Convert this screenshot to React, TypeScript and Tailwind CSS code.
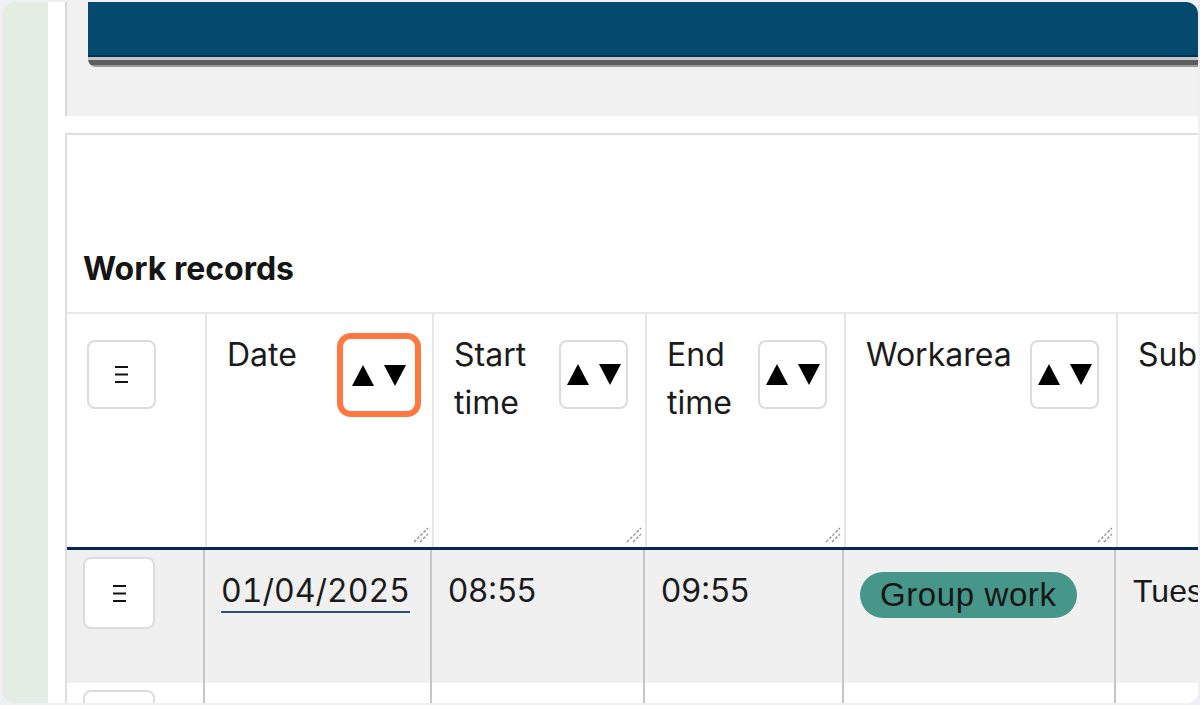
import React from 'react';

const columns = [
  { key: 'date', label: 'Date', width: 'w-[227px]', focused: true },
  { key: 'start', label: 'Start time', width: 'w-[213px]' },
  { key: 'end', label: 'End time', width: 'w-[199px]' },
  { key: 'area', label: 'Workarea', width: 'w-[272px]' },
  { key: 'sub', label: 'Sub-workarea', width: 'w-[272px]', noSort: true },
];

const records = [
  { date: '01/04/2025', start: '08:55', end: '09:55', area: 'Group work', sub: 'Tuesday group', bg: 'bg-[#f0f0f0]' },
  { date: '02/04/2025', start: '10:15', end: '11:30', area: 'Group work', sub: 'Wednesday group', bg: 'bg-white' },
];

function MenuGlyph() {
  return (
    <svg width="13" height="17" viewBox="0 0 13 17" className="text-[#111]">
      <path d="M0 1h13M0 8.5h13M0 16h13" stroke="currentColor" strokeWidth="1.8" />
    </svg>
  );
}

function SortGlyph() {
  return (
    <svg width="54" height="21" viewBox="0 0 54 21">
      <polygon points="0,21 11,0 22,21" fill="#000" />
      <polygon points="32,0 54,0 43,21" fill="#000" />
    </svg>
  );
}

function ResizeHandle() {
  return (
    <svg
      width="16"
      height="16"
      viewBox="0 0 16 16"
      className="absolute bottom-[4px] right-[3px]"
    >
      <path d="M1 15L15 1M7 15L15 7" stroke="#8f8f8f" strokeWidth="1.3" strokeDasharray="3 1.5" />
    </svg>
  );
}

function RowButton({ size }: { size: string }) {
  return (
    <button
      className={`${size} flex items-center justify-center rounded-[8px] border-2 border-[#dcdcdc] bg-white`}
    >
      <MenuGlyph />
    </button>
  );
}

export default function App() {
  return (
    <div
      className="w-[1200px] h-[705px] overflow-hidden bg-[#eef0f3] p-[2px] text-[#1b1b1b]"
      style={{ fontFamily: 'Inter, "Open Sans", sans-serif' }}
    >
      <div className="flex h-full overflow-hidden rounded-[12px] bg-white">
        {/* sidebar */}
        <div className="w-[46px] shrink-0 bg-[#e3ede3]" />
        <div className="w-[17px] shrink-0 bg-white" />

        <div className="flex min-w-0 flex-1 flex-col">
          {/* top panel with banner */}
          <div className="h-[114px] shrink-0 border-l-2 border-[#d8d8d8] bg-[#f1f1f1] pl-[21px]">
            <div className="overflow-hidden rounded-bl-[8px]">
              <div className="h-[53px] bg-[#034a6e]" />
              <div className="h-[2px] bg-[#02325a]" />
              <div className="h-[3px] bg-[#c6c6c6]" />
              <div className="h-[5px] bg-[#5e5e5e]" />
              <div className="h-[2px] bg-[#9a9a9a]" />
            </div>
          </div>

          <div className="h-[17px] shrink-0 bg-white" />

          {/* card */}
          <div className="flex-1 border-l-2 border-t-2 border-[#dedede] bg-white">
            <h2 className="pl-[16px] pt-[115px] pb-[25px] text-[32px] font-bold leading-[37px] text-[#151515]">
              Work records
            </h2>

            <div className="border-t-2 border-[#e8e8e8]">
              {/* header row */}
              <div className="flex h-[236px] border-b-[3px] border-[#062a52]">
                <div className="relative w-[140px] shrink-0 border-r-2 border-[#e6e6e6] pl-[20px] pt-[26px]">
                  <RowButton size="w-[69px] h-[69px]" />
                </div>
                {columns.map((col) => (
                  <div
                    key={col.key}
                    className={`${col.width} relative flex shrink-0 items-start justify-between gap-[8px] border-r-2 border-[#e6e6e6] pl-[20px] pr-[17px] pt-[17px]`}
                  >
                    <span className="text-[32px] leading-[48px]">{col.label}</span>
                    {!col.noSort &&
                      (col.focused ? (
                        <button className="mt-[8px] flex h-[72px] w-[72px] shrink-0 items-center justify-center rounded-[8px] bg-white outline-[6px] outline-solid outline-[#ff7842]">
                          <SortGlyph />
                        </button>
                      ) : (
                        <button className="mt-[9px] flex h-[69px] w-[69px] shrink-0 items-center justify-center rounded-[8px] border-2 border-[#dcdcdc] bg-white">
                          <SortGlyph />
                        </button>
                      ))}
                    <ResizeHandle />
                  </div>
                ))}
              </div>

              {/* data rows */}
              {records.map((r) => (
                <div key={r.date} className={`flex h-[133px] ${r.bg}`}>
                  <div className="w-[138px] shrink-0 border-r-2 border-[#c6c6c6] pl-[16px] pt-[7px]">
                    <RowButton size="w-[72px] h-[72px]" />
                  </div>
                  <div className="w-[227px] shrink-0 border-r-2 border-[#c6c6c6] pl-[16px] pt-[17px]">
                    <span className="text-[32px] leading-[48px] tabular-nums underline decoration-[#27507c] decoration-2 underline-offset-[9px]">
                      {r.date}
                    </span>
                  </div>
                  <div className="w-[213px] shrink-0 border-r-2 border-[#c6c6c6] pl-[16px] pt-[17px] text-[32px] leading-[48px]">
                    {r.start}
                  </div>
                  <div className="w-[199px] shrink-0 border-r-2 border-[#c6c6c6] pl-[16px] pt-[17px] text-[32px] leading-[48px]">
                    {r.end}
                  </div>
                  <div className="w-[272px] shrink-0 border-r-2 border-[#c6c6c6] pl-[16px] pt-[22px]">
                    <span
                      className="inline-block h-[46px] rounded-full bg-[#46968a] px-[20px] text-[33px] leading-[46px] tracking-[0.6px] text-[#161616]"
                      style={{ fontFamily: '"Liberation Sans", Arial, sans-serif' }}
                    >
                      {r.area}
                    </span>
                  </div>
                  <div
                    className="w-[272px] shrink-0 whitespace-nowrap pl-[17px] pt-[17px] text-[32px] leading-[48px]"
                    style={{ fontFamily: '"Liberation Sans", Arial, sans-serif' }}
                  >
                    {r.sub}
                  </div>
                </div>
              ))}
            </div>
          </div>
        </div>
      </div>
    </div>
  );
}
